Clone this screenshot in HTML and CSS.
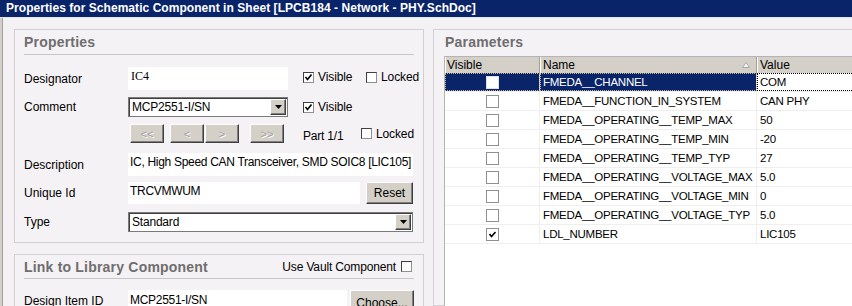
FILE: index.html
```html
<!DOCTYPE html>
<html>
<head>
<meta charset="utf-8">
<link rel="stylesheet" href="styles.css">
</head>
<body>
<div class="titlebar">Properties for Schematic Component in Sheet [LPCB184 - Network - PHY.SchDoc]</div>
<div class="frame">
  <div class="main">
    <div class="leftcol">
      <section class="panel props">
        <h2 class="panel-title">Properties</h2>
        <div class="row r-designator">
          <span class="label">Designator</span>
          <div class="field w-des serif">IC4</div>
          <span class="chk chk-vis chk-top"><span class="cb"><svg width="9" height="9" viewBox="0 0 9 9"><polyline points="1.5,4 3.5,6.5 7.5,1.5" fill="none" stroke="#000" stroke-width="1.6"/></svg></span>Visible</span>
          <span class="chk chk-top"><span class="cb"></span>Locked</span>
        </div>
        <div class="row r-comment">
          <span class="label">Comment</span>
          <div class="combo w-des"><span class="combo-text">MCP2551-I/SN</span><span class="drop"><svg width="7" height="4" viewBox="0 0 7 4"><polygon points="0,0 7,0 3.5,4" fill="#000"/></svg></span></div>
          <span class="chk chk-vis chk-top"><span class="cb"><svg width="9" height="9" viewBox="0 0 9 9"><polyline points="1.5,4 3.5,6.5 7.5,1.5" fill="none" stroke="#000" stroke-width="1.6"/></svg></span>Visible</span>
        </div>
        <div class="row r-nav">
          <span class="label"></span>
          <span class="btn nav dis">&lt;&lt;</span>
          <span class="btn nav dis nav-gap">&lt;</span>
          <span class="btn nav dis nav-tight">&gt;</span>
          <span class="btn nav dis nav-far">&gt;&gt;</span>
          <span class="part">Part 1/1</span>
          <span class="chk"><span class="cb"></span>Locked</span>
        </div>
        <div class="row r-desc">
          <span class="label">Description</span>
          <div class="field w-full">IC, High Speed CAN Transceiver, SMD SOIC8 [LIC105]</div>
        </div>
        <div class="row r-uid">
          <span class="label">Unique Id</span>
          <div class="field w-uid">TRCVMWUM</div>
          <span class="btn reset">Reset</span>
        </div>
        <div class="row r-type">
          <span class="label">Type</span>
          <div class="combo w-full"><span class="combo-text">Standard</span><span class="drop"><svg width="7" height="4" viewBox="0 0 7 4"><polygon points="0,0 7,0 3.5,4" fill="#000"/></svg></span></div>
        </div>
      </section>
      <section class="panel link">
        <div class="link-head">
          <h2 class="panel-title bare">Link to Library Component</h2>
          <span class="vault">Use Vault Component<span class="cb"></span></span>
        </div>
        <div class="row r-item">
          <span class="label">Design Item ID</span>
          <div class="field w-item">MCP2551-I/SN</div>
          <span class="btn choose">Choose...</span>
        </div>
      </section>
    </div>
    <section class="panel params">
      <h2 class="panel-title ptitle">Parameters</h2>
      <div class="table">
        <div class="thead">
          <div class="th c-vis">Visible</div>
          <div class="th c-name"><span>Name</span><svg width="8" height="6" viewBox="0 0 8 6"><polygon points="0.5,5.5 4,0.5 7.5,5.5" fill="#f4f4f4" stroke="#a8a8a8" stroke-width="1"/></svg></div>
          <div class="th c-val">Value</div>
        </div>
        <div class="tr sel">
          <div class="td c-vis"><span class="tcb"></span></div>
          <div class="td c-name">FMEDA__CHANNEL</div>
          <div class="td c-val">COM</div>
        </div>
        <div class="tr">
          <div class="td c-vis"><span class="tcb"></span></div>
          <div class="td c-name">FMEDA__FUNCTION_IN_SYSTEM</div>
          <div class="td c-val">CAN PHY</div>
        </div>
        <div class="tr">
          <div class="td c-vis"><span class="tcb"></span></div>
          <div class="td c-name">FMEDA__OPERATING__TEMP_MAX</div>
          <div class="td c-val">50</div>
        </div>
        <div class="tr">
          <div class="td c-vis"><span class="tcb"></span></div>
          <div class="td c-name">FMEDA__OPERATING__TEMP_MIN</div>
          <div class="td c-val">-20</div>
        </div>
        <div class="tr">
          <div class="td c-vis"><span class="tcb"></span></div>
          <div class="td c-name">FMEDA__OPERATING__TEMP_TYP</div>
          <div class="td c-val">27</div>
        </div>
        <div class="tr">
          <div class="td c-vis"><span class="tcb"></span></div>
          <div class="td c-name">FMEDA__OPERATING__VOLTAGE_MAX</div>
          <div class="td c-val">5.0</div>
        </div>
        <div class="tr">
          <div class="td c-vis"><span class="tcb"></span></div>
          <div class="td c-name">FMEDA__OPERATING__VOLTAGE_MIN</div>
          <div class="td c-val">0</div>
        </div>
        <div class="tr">
          <div class="td c-vis"><span class="tcb"></span></div>
          <div class="td c-name">FMEDA__OPERATING__VOLTAGE_TYP</div>
          <div class="td c-val">5.0</div>
        </div>
        <div class="tr">
          <div class="td c-vis"><span class="tcb"><svg width="11" height="11" viewBox="0 0 11 11"><polyline points="2.5,5 4.5,7.5 8.5,3" fill="none" stroke="#000" stroke-width="1.6"/></svg></span></div>
          <div class="td c-name">LDL_NUMBER</div>
          <div class="td c-val">LIC105</div>
        </div>
      </div>
    </section>
  </div>
</div>
</body>
</html>
```
FILE: styles.css
```css
* { box-sizing: border-box; }
html, body { margin: 0; padding: 0; }
body {
  width: 852px;
  height: 306px;
  overflow: hidden;
  background: #f4f1f4;
  font-family: "Liberation Sans", Arial, sans-serif;
  font-size: 12px;
  color: #000;
}
.titlebar {
  height: 18px;
  background: #0a246a;
  border-bottom: 1px solid #e6e6e6;
  color: #fff;
  font-weight: bold;
  font-size: 12px;
  letter-spacing: 0.05px;
  line-height: 17px;
  padding-left: 6px;
  white-space: nowrap;
}
.frame {
  display: flex;
  height: 288px;
  border-left: 2px solid #d4d0c8;
}
.main {
  display: flex;
  gap: 9px;
  flex: 1;
  min-width: 0;
  border-left: 1px solid #a0a0a0;
  padding: 11px 0 0 11px;
}
.leftcol {
  width: 410px;
  flex: none;
  display: flex;
  flex-direction: column;
  gap: 11px;
}
.panel {
  border: 1px solid #d3cfd3;
  background: #f5f2f5;
  padding: 0 9px;
}
.props { height: 214px; flex: none; }
.link { height: 90px; flex: none; }
.panel-title {
  margin: 0;
  height: 25px;
  border-bottom: 1px solid #c9c5c9;
  font-size: 14px;
  font-weight: bold;
  color: #6e6e6e;
  line-height: 24px;
  letter-spacing: 0.2px;
  white-space: nowrap;
}
.panel-title.bare { border-bottom: none; height: auto; }
.panel-title.ptitle { border-bottom: none; height: 26px; padding-left: 1px; }
.row { display: flex; align-items: center; }
.label { width: 104px; flex: none; }
.r-designator { margin-top: 12px; height: 23px; }
.r-comment { margin-top: 7px; height: 20px; }
.r-nav { margin-top: 7px; height: 19px; }
.r-desc { margin-top: 10px; height: 23px; }
.r-uid { margin-top: 6px; height: 22px; }
.r-type { margin-top: 8px; height: 20px; }
.r-item { margin-top: 11px; height: 23px; align-items: flex-start; }
.r-item .label { margin-top: 4px; }

.field {
  background: #fff;
  height: 100%;
  padding: 2px 2px 0;
  line-height: 15px;
  white-space: nowrap;
  overflow: hidden;
  letter-spacing: -0.3px;
}
.serif { font-family: "Liberation Serif", serif; font-size: 12px; letter-spacing: 0; padding-left: 3px; }
.w-des { width: 160px; flex: none; }
.w-full { width: 285px; flex: none; }
.w-uid { width: 232px; flex: none; }
.w-item { width: 219px; flex: none; height: 30px; padding-top: 3px; }

.combo {
  height: 20px;
  background: #fff;
  border: 1px solid #7a7a7a;
  box-shadow: inset 1px 1px 0 #404040;
  display: flex;
  align-items: center;
  padding: 1px 1px 1px 3px;
}
.combo-text { flex: 1; white-space: nowrap; letter-spacing: -0.2px; }
.drop {
  width: 16px;
  height: 16px;
  background: #d4d0c8;
  border: 1px solid;
  border-color: #fff #404040 #404040 #fff;
  box-shadow: inset -1px -1px 0 #808080;
  display: flex;
  align-items: center;
  justify-content: center;
}

.chk { display: flex; align-items: center; gap: 4px; white-space: nowrap; letter-spacing: -0.1px; }
.chk-top { align-self: flex-start; margin-top: 3px; }
.chk-vis { margin-left: 15px; width: 63px; flex: none; }
.cb {
  width: 11px;
  height: 11px;
  flex: none;
  background: #fff;
  border: 1px solid;
  border-color: #404040 #909090 #909090 #404040;
  display: flex;
  align-items: center;
  justify-content: center;
}

.btn {
  background: #d4d0c8;
  border: 1px solid;
  border-color: #fff #404040 #404040 #fff;
  box-shadow: inset -1px -1px 0 #808080;
  display: flex;
  align-items: center;
  justify-content: center;
  white-space: nowrap;
  flex: none;
}
.nav { width: 34px; height: 19px; margin-left: 2px; font-size: 11px; }
.nav-gap { margin-left: 6px; }
.nav-tight { margin-left: 1px; }
.nav-far { margin-left: 11px; }
.dis { color: #a0a0a0; text-shadow: 1px 1px 0 #fff; }
.part { margin-left: 19px; width: 63px; padding-top: 4px; letter-spacing: -0.2px; }
.reset { width: 47px; height: 22px; margin-left: 6px; }
.choose { width: 64px; height: 26px; margin-left: 3px; }

.link-head {
  display: flex;
  align-items: center;
  justify-content: space-between;
  height: 24px;
  border-bottom: 1px solid #c9c5c9;
}
.vault { display: flex; align-items: center; gap: 5px; margin-right: 2px; white-space: nowrap; letter-spacing: -0.15px; }

.params {
  width: 440px;
  flex: none;
  padding: 0 0 0 10px;
}
.table {
  background: #fff;
  border-top: 1px solid #b4b4b4;
  border-left: 1px solid #b4b4b4;
  height: 260px;
  font-size: 11.5px;
  letter-spacing: -0.25px;
}
.thead { display: flex; height: 16px; background: #d4d0c8; }
.th {
  line-height: 16px;
  padding-left: 3px;
  border-right: 1px solid #a0a0a0;
  box-shadow: inset 1px 0 0 #fff;
  font-size: 12px;
  letter-spacing: 0;
  white-space: nowrap;
}
.th.c-vis { padding-left: 2px; }
.th.c-name { display: flex; align-items: center; justify-content: space-between; padding-right: 6px; }
.c-vis { width: 95px; flex: none; }
.c-name { width: 217px; flex: none; }
.c-val { flex: 1; }
.tr { display: flex; height: 19px; border-bottom: 1px solid #efefef; }
.td {
  line-height: 19px;
  padding-left: 3px;
  border-right: 1px solid #efefef;
  white-space: nowrap;
}
.td.c-vis { display: flex; align-items: center; justify-content: center; padding: 0; }
.tcb {
  width: 13px;
  height: 13px;
  border: 1px solid #8f8f8f;
  background: #fff;
  display: flex;
  align-items: center;
  justify-content: center;
}
.sel .c-vis, .sel .c-name {
  background: #0a246a;
  color: #fff;
  outline: 1px dotted #c8b888;
  outline-offset: -1px;
}
.sel .tcb { border-color: #e0e0e0; }
.sel .c-val { outline: 1px dotted #000; outline-offset: -1px; }
```
